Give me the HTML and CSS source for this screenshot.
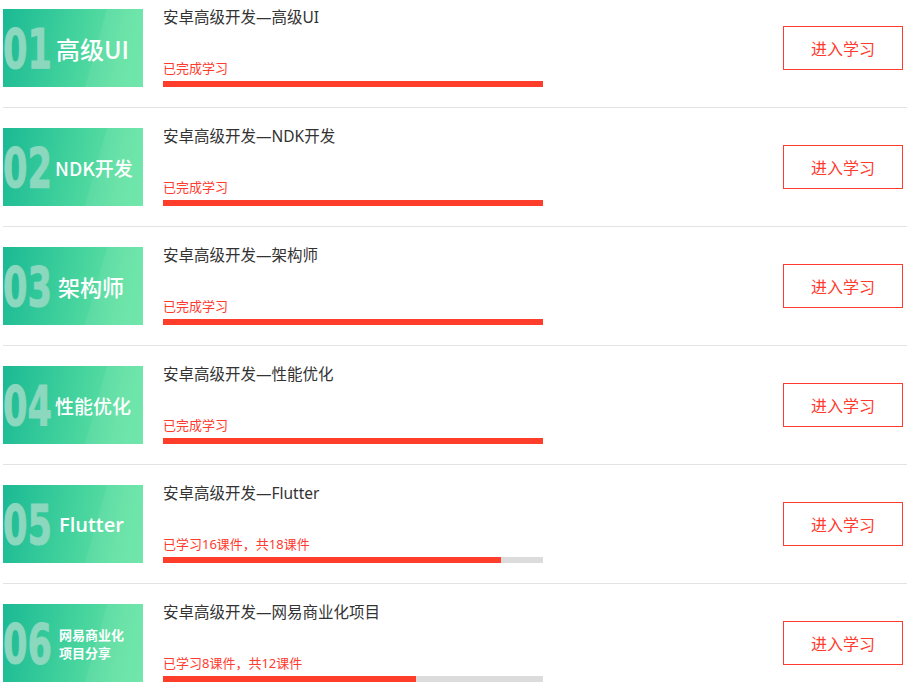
FILE: index.html
```html
<!DOCTYPE html>
<html lang="zh">
<head>
<meta charset="utf-8">
<link rel="stylesheet" href="styles.css">
</head>
<body>
<div class="list">
  <div class="row">
    <div class="cover"><span class="num">01</span><span class="label l-big">高级UI</span></div>
    <div class="info">
      <div class="title">安卓高级开发—高级UI</div>
      <div class="prog">
        <div class="status">已完成学习</div>
        <div class="bar"><div class="fill" style="width:100%"></div></div>
      </div>
    </div>
    <a class="btn">进入学习</a>
  </div>
  <div class="row">
    <div class="cover"><span class="num">02</span><span class="label l-mid">NDK开发</span></div>
    <div class="info">
      <div class="title">安卓高级开发—NDK开发</div>
      <div class="prog">
        <div class="status">已完成学习</div>
        <div class="bar"><div class="fill" style="width:100%"></div></div>
      </div>
    </div>
    <a class="btn">进入学习</a>
  </div>
  <div class="row">
    <div class="cover"><span class="num">03</span><span class="label l-mid2">架构师</span></div>
    <div class="info">
      <div class="title">安卓高级开发—架构师</div>
      <div class="prog">
        <div class="status">已完成学习</div>
        <div class="bar"><div class="fill" style="width:100%"></div></div>
      </div>
    </div>
    <a class="btn">进入学习</a>
  </div>
  <div class="row">
    <div class="cover"><span class="num">04</span><span class="label l-mid">性能优化</span></div>
    <div class="info">
      <div class="title">安卓高级开发—性能优化</div>
      <div class="prog">
        <div class="status">已完成学习</div>
        <div class="bar"><div class="fill" style="width:100%"></div></div>
      </div>
    </div>
    <a class="btn">进入学习</a>
  </div>
  <div class="row">
    <div class="cover"><span class="num">05</span><span class="label l-latin">Flutter</span></div>
    <div class="info">
      <div class="title">安卓高级开发—Flutter</div>
      <div class="prog">
        <div class="status">已学习16课件，共18课件</div>
        <div class="bar"><div class="fill" style="width:88.9%"></div></div>
      </div>
    </div>
    <a class="btn">进入学习</a>
  </div>
  <div class="row">
    <div class="cover"><span class="num">06</span><span class="label l-small"><span class="ln">网易商业化</span><span class="ln">项目分享</span></span></div>
    <div class="info">
      <div class="title">安卓高级开发—网易商业化项目</div>
      <div class="prog">
        <div class="status">已学习8课件，共12课件</div>
        <div class="bar"><div class="fill" style="width:66.7%"></div></div>
      </div>
    </div>
    <a class="btn">进入学习</a>
  </div>
</div>
</body>
</html>
```

FILE: styles.css
```css
html, body {
  margin: 0;
  padding: 0;
  background: #fff;
  font-family: "Noto Sans", "Noto Sans CJK SC", sans-serif;
}
.list {
  margin-left: 3px;
  padding-top: 9px;
}
.row {
  display: flex;
  align-items: center;
  padding: 20px 4px 20px 0;
  border-bottom: 1px solid #e3e3e3;
}
.row:first-child {
  padding-top: 0;
}
.cover {
  position: relative;
  width: 140px;
  height: 78px;
  flex: none;
  overflow: hidden;
  display: flex;
  align-items: center;
  background: linear-gradient(100deg, #1ab994 0%, #3fd09c 45%, #5fe0a2 80%, #68e6a6 100%);
}
.cover::before {
  content: "";
  position: absolute;
  top: 0; bottom: 0; left: 0; right: 0;
  background: rgba(255,255,255,0.07);
  clip-path: polygon(104px 0, 140px 0, 140px 78px, 82px 78px);
}
.num {
  position: relative;
  flex: none;
  width: 51px;
  height: 78px;
  display: block;
  font-family: "DejaVu Sans", sans-serif;
  font-weight: bold;
  font-size: 56px;
  line-height: 78px;
  color: #8bd8bf;
  -webkit-text-stroke: 1px #8bd8bf;
  transform: scaleX(0.63);
  transform-origin: 0 50%;
  margin-top: 2px;
  white-space: nowrap;
}
.label {
  position: relative;
  color: #fff;
  white-space: nowrap;
  font-family: "Noto Sans CJK SC", sans-serif;
  font-weight: 500;
}
.l-big {
  font-size: 24px;
  margin-left: 2px;
}
.l-mid {
  font-size: 19px;
  margin-left: 1px;
}
.l-mid2 {
  font-size: 22px;
  margin-left: 4px;
}
.l-latin {
  font-family: "Open Sans", "Noto Sans", sans-serif;
  font-weight: 600;
  font-size: 20px;
  margin-left: 5px;
}
.l-small {
  font-size: 13px;
  font-weight: bold;
  margin-left: 5px;
  margin-top: 2px;
  display: flex;
  flex-direction: column;
}
.ln {
  display: block;
  line-height: 18px;
  height: 18px;
}
.info {
  flex: none;
  width: 380px;
  height: 78px;
  margin-left: 20px;
  display: flex;
  flex-direction: column;
  justify-content: space-between;
}
.title {
  font-size: 15.5px;
  line-height: 20px;
  color: #333;
  margin-top: -2px;
}
.status {
  font-size: 13px;
  line-height: 18px;
  color: #ff3b2f;
}
.bar {
  margin-top: 4px;
  height: 6px;
  background: #dcdcdc;
}
.fill {
  height: 100%;
  background: #ff3d2b;
}
.btn {
  margin-left: auto;
  width: 118px;
  height: 42px;
  border: 1px solid #ff3b2f;
  color: #ff3b2f;
  font-size: 16px;
  font-family: "Noto Sans CJK SC", sans-serif;
  display: flex;
  align-items: center;
  justify-content: center;
  cursor: pointer;
}
```
